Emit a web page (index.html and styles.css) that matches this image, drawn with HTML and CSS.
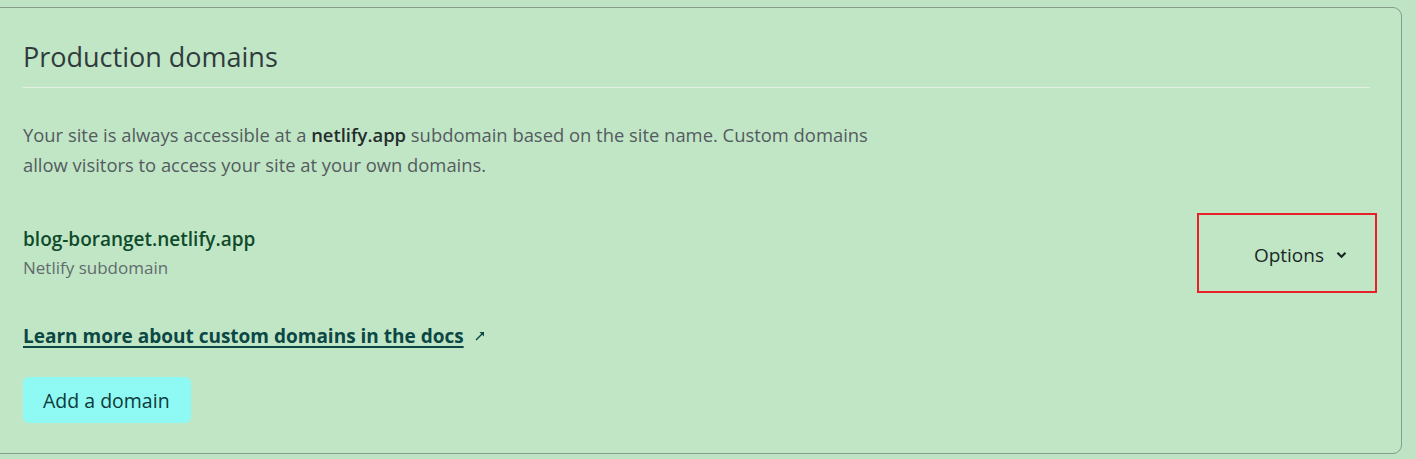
FILE: index.html
```html
<!DOCTYPE html>
<html lang="en">
<head>
<meta charset="utf-8">
<title>Production domains</title>
<link rel="stylesheet" href="styles.css">
</head>
<body>
<section class="card">
  <h2 class="card-title">Production domains</h2>
  <p class="intro">Your site is always accessible at a <strong>netlify.app</strong> subdomain based on the site name. Custom domains allow visitors to access your site at your own domains.</p>
  <div class="domain-row">
    <div class="domain-info">
      <div class="domain-name">blog-boranget.netlify.app</div>
      <div class="domain-sub">Netlify subdomain</div>
    </div>
    <div class="options-box">
      <button class="options-btn" type="button">Options
        <svg class="chev" width="11" height="8" viewBox="0 0 11 8"><path d="M1.5 1.8 L5.5 5.8 L9.5 1.8" fill="none" stroke="currentColor" stroke-width="2.2"/></svg>
      </button>
    </div>
  </div>
  <p class="docs"><a class="docs-link" href="#">Learn more about custom domains in the docs</a><svg class="ext" width="12" height="12" viewBox="0 0 12 12"><path d="M2 10 L9.5 2.5" stroke="currentColor" stroke-width="1.5"/><path d="M5.5 2 H10 V6.5 Z" fill="currentColor"/></svg></p>
  <button class="add-btn" type="button">Add a domain</button>
</section>
</body>
</html>
```

FILE: styles.css
```css
* { box-sizing: border-box; }
html, body { margin: 0; padding: 0; }
body {
  background: #bfe3c5;
  font-family: "Open Sans", "Lato", sans-serif;
  width: 1416px;
  height: 459px;
  overflow: hidden;
}
.card {
  margin: 7px 14px 0 -10px;
  height: 447px;
  background: #c1e6c6;
  border: 1px solid #879c89;
  border-radius: 9px;
  padding: 0 31px 0 32px;
  display: flex;
  flex-direction: column;
  align-items: flex-start;
}
.card > * { flex-shrink: 0; }
.card-title {
  align-self: stretch;
  margin: 0;
  padding: 33px 0 14px;
  font-size: 27px;
  font-weight: 500;
  color: #2f3b3c;
  border-bottom: 1px solid #e2f1e3;
  line-height: 32px;
}
.intro {
  margin: 32px 0 0;
  max-width: 880px;
  font-size: 18.4px;
  line-height: 30px;
  color: #545b5f;
}
.intro strong { color: #252c2c; font-weight: 600; }
.domain-row {
  align-self: stretch;
  display: flex;
  justify-content: space-between;
  align-items: center;
  margin-top: 33px;
  margin-right: -7px;
}
.domain-name {
  font-size: 19px;
  color: #0f4a2b;
  font-weight: 600;
  line-height: 24px;
  margin-top: 1px;
}
.domain-sub {
  font-size: 17px;
  color: #626b6e;
  line-height: 24px;
  margin-top: 5px;
}
.options-box {
  width: 180px;
  height: 80px;
  border: 2px solid #e8202a;
  display: flex;
  align-items: center;
  justify-content: flex-end;
  padding-right: 28px;
}
.options-btn {
  background: none;
  border: 0;
  padding: 0;
  font-family: inherit;
  font-size: 19px;
  color: #1b2626;
  display: flex;
  align-items: center;
  gap: 12px;
  margin-top: 4px;
}
.chev { color: #1b2626; }
.docs {
  margin: 30px 0 0;
  display: flex;
  align-items: center;
  gap: 10px;
}
.docs-link {
  font-size: 19px;
  font-weight: 700;
  color: #0b4744;
  text-decoration: underline;
  text-decoration-thickness: 2px;
  text-underline-offset: 3px;
}
.ext { color: #0b4744; }
.add-btn {
  margin-top: 28px;
  width: 168px;
  height: 46px;
  padding: 0 0 0 20px;
  text-align: left;
  background: #8ffaf3;
  border: 0;
  border-radius: 6px;
  font-family: inherit;
  font-size: 19.5px;
  color: #0e3a3a;
}
```
